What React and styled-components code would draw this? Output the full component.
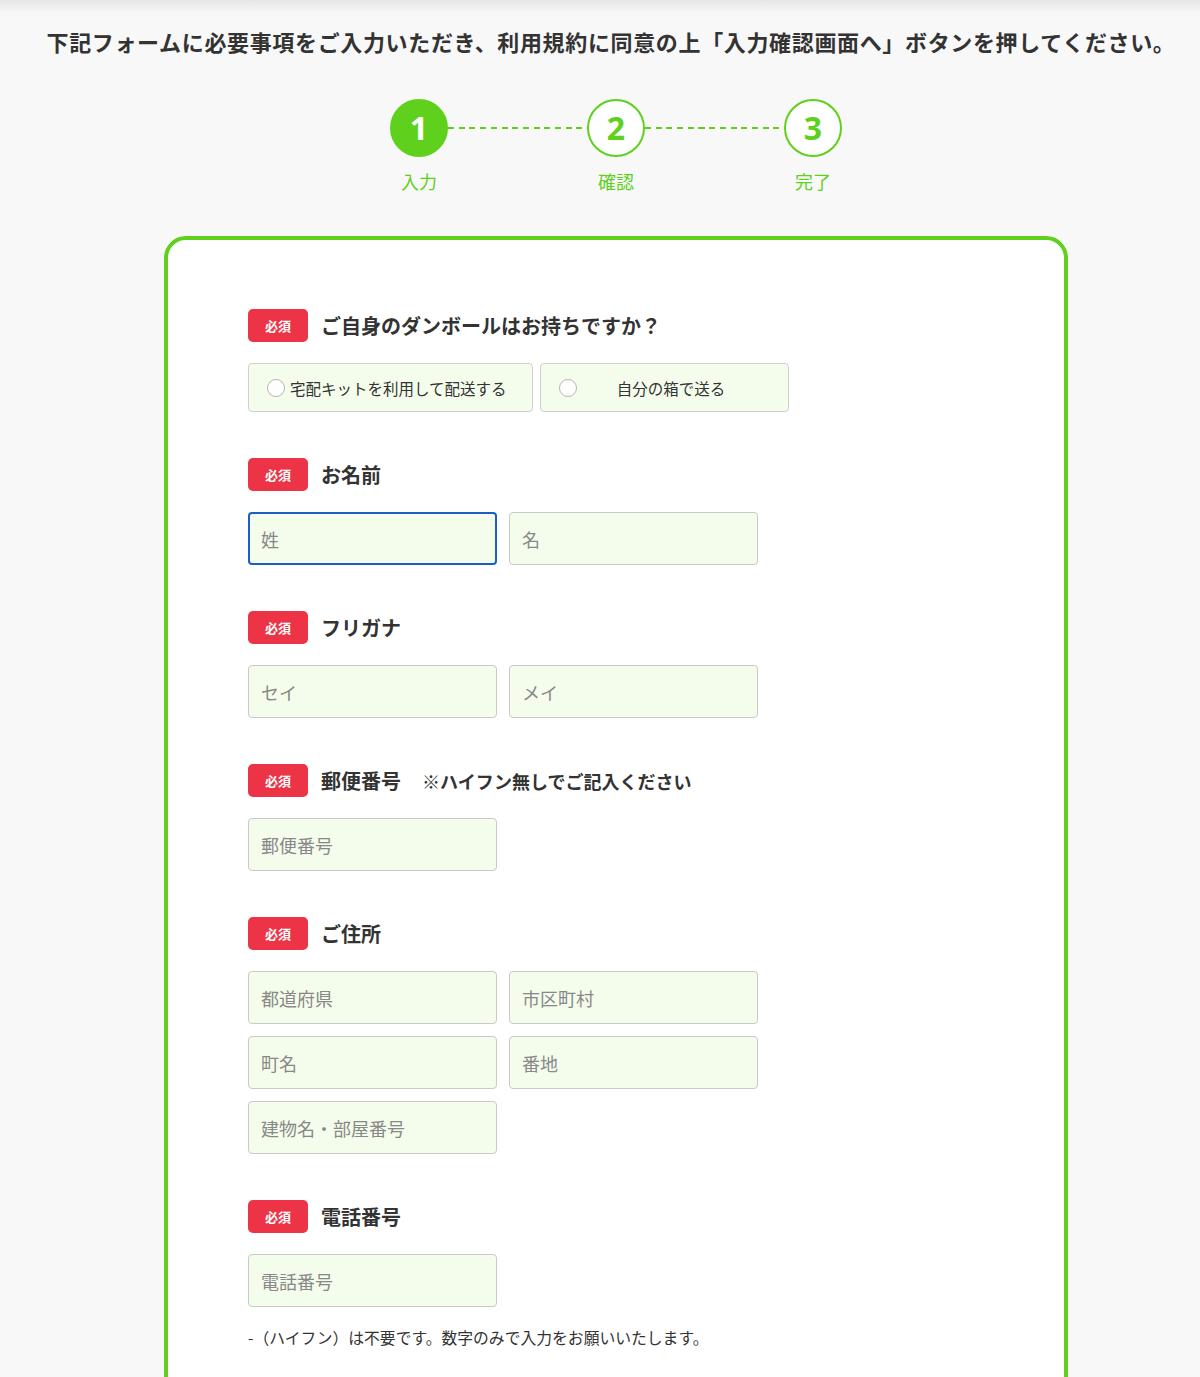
import styled, { createGlobalStyle } from 'styled-components';

const GREEN = '#5fd11c';

const GlobalStyle = createGlobalStyle`
	* { box-sizing: border-box; }
	body {
		margin: 0;
		background: linear-gradient(#e6e6e6, #f8f8f8 14px) no-repeat, #f8f8f8;
		font-family: "Noto Sans CJK JP", "Noto Sans", sans-serif;
		color: #333;
	}
`;

const Page = styled.div`
	padding: 25px 0 0 32px;
`;

const Lead = styled.h1`
	margin: 0 10px 0 0;
	font-size: 22px;
	font-weight: 700;
	letter-spacing: 0.65px;
	line-height: 33px;
	text-align: center;
	color: #333;
	white-space: nowrap;
`;

const Steps = styled.ol`
	display: flex;
	justify-content: center;
	margin: 41px 0 0;
	padding: 0;
	list-style: none;
`;

const Step = styled.li`
	display: flex;
	flex-direction: column;
	align-items: center;
	width: 58px;
`;

const StepCircle = styled.span`
	display: flex;
	align-items: center;
	justify-content: center;
	width: 58px;
	height: 58px;
	border-radius: 50%;
	border: 2px solid ${GREEN};
	background: ${({ $current }) => ($current ? GREEN : '#fff')};
	color: ${({ $current }) => ($current ? '#fff' : GREEN)};
	font-family: "Open Sans", "Noto Sans", sans-serif;
	font-size: 32px;
	font-weight: 700;
	line-height: 1;
`;

const StepLabel = styled.span`
	margin-top: 11px;
	font-size: 18px;
	line-height: 26px;
	color: ${GREEN};
	white-space: nowrap;
`;

const Connector = styled.span`
	width: 139px;
	height: 2px;
	margin-top: 28px;
	background: repeating-linear-gradient(90deg, ${GREEN} 0 6px, transparent 6px 10.7px);
`;

const Card = styled.section`
	width: 904px;
	margin: 42px auto 0;
	padding: 69px 80px 80px;
	background: #fff;
	border: 4px solid ${GREEN};
	border-radius: 22px;
`;

const Field = styled.div`
	margin-bottom: 46px;
`;

const LabelRow = styled.div`
	display: flex;
	align-items: center;
	gap: 13px;
	margin-bottom: 21px;
`;

const Required = styled.span`
	display: inline-flex;
	align-items: center;
	justify-content: center;
	width: 60px;
	height: 33px;
	border-radius: 5px;
	background: #ec3446;
	color: #fff;
	font-size: 13px;
	font-weight: 700;
`;

const Title = styled.span`
	font-size: 20px;
	font-weight: 700;
	color: #333;
`;

const Hint = styled.span`
	margin-left: 8px;
	font-size: 18px;
	font-weight: 700;
`;

const RadioRow = styled.div`
	display: flex;
	gap: 7px;
	margin-bottom: 3px;
`;

const RadioOption = styled.label`
	display: flex;
	align-items: center;
	gap: 5px;
	width: ${({ $width }) => $width}px;
	height: 49px;
	padding: 0 ${({ $center }) => ($center ? 28 : 16)}px 0 18px;
	background: #f4fdec;
	border: 1px solid #cfcfcf;
	border-radius: 4px;
	font-size: 15.5px;
	color: #333;
	cursor: pointer;

	& span {
		flex: ${({ $center }) => ($center ? 1 : 'none')};
		text-align: center;
	}
`;

const Radio = styled.input.attrs({ type: 'radio' })`
	appearance: none;
	flex: none;
	width: 18px;
	height: 18px;
	margin: 0;
	border-radius: 50%;
	border: 1px solid #b5b5b5;
	background: #fff;
`;

const Inputs = styled.div`
	display: grid;
	grid-template-columns: repeat(2, 249px);
	column-gap: 12px;
	row-gap: 12px;
`;

const TextInput = styled.input`
	width: 249px;
	height: 53px;
	padding: 0 12px;
	background: #f4fdec;
	border: ${({ $active }) => ($active ? '2px solid #1b5fc4' : '1px solid #c9c9c9')};
	padding-left: ${({ $active }) => ($active ? 11 : 12)}px;
	border-radius: 4px;
	font-family: inherit;
	font-size: 18px;
	color: #333;
	outline: none;

	&::placeholder {
		color: #888;
	}
`;

const Note = styled.p`
	margin: 19px 0 0;
	font-size: 15.8px;
	color: #333;
`;

const steps = [
	{ no: 1, label: '入力' },
	{ no: 2, label: '確認' },
	{ no: 3, label: '完了' },
];

const FieldLabel = ({ children, hint }) => (
	<LabelRow>
		<Required>必須</Required>
		<Title>{children}</Title>
		{hint && <Hint>{hint}</Hint>}
	</LabelRow>
);

export default function App() {
	return (
		<Page>
			<GlobalStyle />
			<Lead>下記フォームに必要事項をご入力いただき、利用規約に同意の上「入力確認画面へ」ボタンを押してください。</Lead>

			<Steps>
				{steps.map((step, i) => (
					<>
						{i > 0 && <Connector key={`line-${step.no}`} />}
						<Step key={step.no}>
							<StepCircle $current={i === 0}>{step.no}</StepCircle>
							<StepLabel>{step.label}</StepLabel>
						</Step>
					</>
				))}
			</Steps>

			<Card>
				<Field>
					<FieldLabel>ご自身のダンボールはお持ちですか？</FieldLabel>
					<RadioRow>
						<RadioOption $width={285}>
							<Radio name="box" />
							<span>宅配キットを利用して配送する</span>
						</RadioOption>
						<RadioOption $width={249} $center>
							<Radio name="box" />
							<span>自分の箱で送る</span>
						</RadioOption>
					</RadioRow>
				</Field>

				<Field>
					<FieldLabel>お名前</FieldLabel>
					<Inputs>
						<TextInput placeholder="姓" $active />
						<TextInput placeholder="名" />
					</Inputs>
				</Field>

				<Field>
					<FieldLabel>フリガナ</FieldLabel>
					<Inputs>
						<TextInput placeholder="セイ" />
						<TextInput placeholder="メイ" />
					</Inputs>
				</Field>

				<Field>
					<FieldLabel hint="※ハイフン無しでご記入ください">郵便番号</FieldLabel>
					<Inputs>
						<TextInput placeholder="郵便番号" />
					</Inputs>
				</Field>

				<Field>
					<FieldLabel>ご住所</FieldLabel>
					<Inputs>
						<TextInput placeholder="都道府県" />
						<TextInput placeholder="市区町村" />
						<TextInput placeholder="町名" />
						<TextInput placeholder="番地" />
						<TextInput placeholder="建物名・部屋番号" />
					</Inputs>
				</Field>

				<Field>
					<FieldLabel>電話番号</FieldLabel>
					<Inputs>
						<TextInput placeholder="電話番号" />
					</Inputs>
					<Note>-（ハイフン）は不要です。数字のみで入力をお願いいたします。</Note>
				</Field>
			</Card>
		</Page>
	);
}
